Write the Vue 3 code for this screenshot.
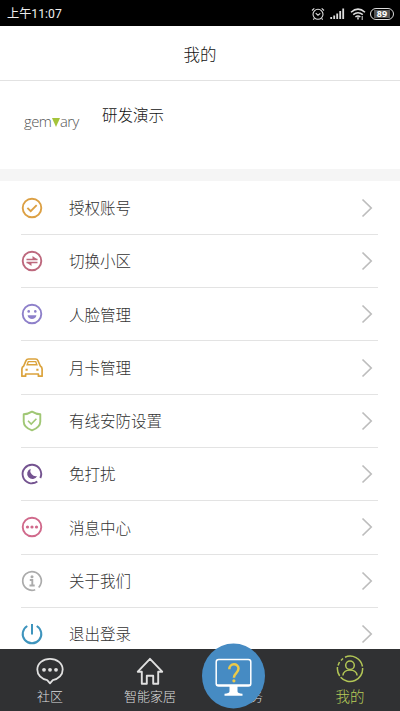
<script setup>
const rows = [
  { label: '授权账号', icon: 'check', color: '#dca044' },
  { label: '切换小区', icon: 'swap', color: '#bd687d' },
  { label: '人脸管理', icon: 'face', color: '#8e80ca' },
  { label: '月卡管理', icon: 'car', color: '#dba33c' },
  { label: '有线安防设置', icon: 'shield', color: '#a0c775' },
  { label: '免打扰', icon: 'moon', color: '#745390' },
  { label: '消息中心', icon: 'dots', color: '#d0698b' },
  { label: '关于我们', icon: 'info', color: '#ababab' },
  { label: '退出登录', icon: 'power', color: '#3e94bd' },
]
</script>

<template>
  <div class="screen">
    <div class="status">
      <span class="time">上午11:07</span>
      <svg class="alarm" viewBox="0 0 14 14" width="14" height="14" fill="none" stroke="#ddd" stroke-width="1.1">
        <circle cx="7" cy="7.3" r="5" /><path d="M4.7 6.2 7 8.2l2.3-1.8M1 3.5 3.3 1.4M13 3.5 10.7 1.4M3.4 11.4 2.3 12.7M10.6 11.4l1.1 1.3" />
      </svg>
      <svg class="signal" viewBox="0 0 15 11" width="15" height="11" stroke="#ddd" stroke-width="1.8">
        <path d="M1.2 11V9M4.2 11V7.5M7.2 11V5.5M10.2 11V3M13.2 11V.5" />
      </svg>
      <svg class="wifi" viewBox="0 0 16 12" width="16" height="12" fill="none" stroke="#ddd" stroke-width="1.5">
        <path d="M1 4.2Q8-2 15 4.2M3.2 6.7q4.8-4 9.6 0M5.4 9q2.6-2 5 0" /><path d="M8 9.2v2.4" /><path stroke-width="1" d="M12.2 8v4" />
      </svg>
      <span class="battery"><b>89</b></span>
    </div>
    <header class="title">我的</header>
    <section class="profile">
      <div class="logo">gem<svg viewBox="0 0 8 9" width="8" height="9"><path d="M0 0h8L4 9z" fill="#a4c43a" /></svg>ary</div>
      <div class="name">研发演示</div>
    </section>
    <main class="list">
      <div v-for="row in rows" :key="row.icon" class="row">
        <svg class="icon" viewBox="0 0 24 24" width="24" height="24" fill="none" :stroke="row.color" stroke-width="1.9">
          <template v-if="row.icon === 'check'">
            <circle cx="12" cy="12" r="9.3" /><path d="m7.4 11.8 3.3 3.3 6-6" />
          </template>
          <template v-else-if="row.icon === 'swap'">
            <circle cx="12" cy="12" r="9.3" /><path stroke-width="1.5" d="M6.5 10.5h11M6.5 13.5h11" /><path d="M12.5 7l5 3.5h-5zM11.5 17l-5-3.5h5z" :fill="row.color" stroke="none" />
          </template>
          <template v-else-if="row.icon === 'face'">
            <circle cx="12" cy="12" r="9.3" /><circle cx="8.7" cy="9.4" r="1.3" :fill="row.color" stroke="none" /><circle cx="15.3" cy="9.4" r="1.3" :fill="row.color" stroke="none" /><path d="M7.6 13.3h8.8c-.5 5-8.3 5-8.8 0z" :fill="row.color" stroke="none" />
          </template>
          <template v-else-if="row.icon === 'car'">
            <path stroke-width="1.7" stroke-linejoin="round" d="M1.9 20.2V13q0-2 1.8-3L6 4.7Q6.700 3 8.500 3h7q1.800 0 2.500 1.700l2.300 5.300q1.800 1 1.800 3v7.200h-3.700V18H5.600v2.200z" />
            <path stroke-width="1.4" d="M8.300 5.600h7.400l1.200 3.200H7.100z" /><path d="M5.500 13.700h2.200M16.300 13.700h2.200" />
          </template>
          <template v-else-if="row.icon === 'shield'">
            <path stroke-linejoin="round" d="M12 2.600q4 2.500 8.300 2.600v7.300q0 5.800-8.300 8.900-8.300-3.100-8.300-8.900V5.200Q8 5.100 12 2.600z" /><path stroke-width="1.6" d="m8 11.800 3.200 3.200 5.200-5.200" />
          </template>
          <template v-else-if="row.icon === 'moon'">
            <path d="M17.300 19.600A9.300 9.300 0 1 1 20.300 16M15.500 20.600 12 21.300" /><path d="M10.600 6.700a5.300 5.300 0 1 0 6.600 7.300 5.600 5.600 0 0 1-6.600-7.300z" :fill="row.color" stroke="none" />
          </template>
          <template v-else-if="row.icon === 'dots'">
            <circle cx="12" cy="12" r="9.3" /><circle v-for="x in [7.5, 12, 16.5]" :key="x" :cx="x" cy="12" r="1.6" :fill="row.color" stroke="none" />
          </template>
          <template v-else-if="row.icon === 'info'">
            <path stroke-width="1.7" d="M15.200 20.700A9.300 9.300 0 1 1 20.300 16.200Q19.700 17.400 18.700 18.500" /><circle cx="12" cy="7.7" r="1.5" :fill="row.color" stroke="none" /><path d="M9.800 11h2.500v5.500M9.500 16.500h5.200" />
          </template>
          <template v-else>
            <path stroke-width="2" d="M12 2v10.500M7.300 4a9.300 9.300 0 1 0 9.400 0" />
          </template>
        </svg>
        <span class="label">{{ row.label }}</span>
        <svg class="chevron" viewBox="0 0 12 20" width="12" height="20" fill="none" stroke="#bdbdbd" stroke-width="1.7"><path d="m1.500 1.500 8.700 8.500-8.700 8.500" /></svg>
      </div>
    </main>
    <nav class="tabs">
      <div class="tab">
        <svg viewBox="0 0 28 28" width="28" height="28" fill="none" stroke="#e0e0e0" stroke-width="1.8" stroke-linejoin="round">
          <path d="M14 1.800c7 0 12.700 4.700 12.700 10.800 0 5.300-4 9.500-9.900 10.500L14 26.300l-2.800-3.200C5.300 22.100 1.300 17.900 1.300 12.600 1.300 6.500 7 1.800 14 1.800z" />
          <circle v-for="x in [8, 14, 20]" :key="x" :cx="x" cy="12.8" r="1.9" fill="#e0e0e0" stroke="none" />
        </svg>
        <span>社区</span>
      </div>
      <div class="tab">
        <svg viewBox="0 0 28 28" width="28" height="28" fill="none" stroke="#e0e0e0" stroke-width="1.9" stroke-linejoin="round">
          <path d="M14 1.800 1.800 14.700h4v12h5v-8h6.400v8h5v-12h4z" />
        </svg>
        <span>智能家居</span>
      </div>
      <div class="tab"><i class="blank"></i><span>服务</span></div>
      <div class="tab active">
        <svg viewBox="0 0 28 28" width="28" height="28" fill="none" stroke="#b2c656" stroke-width="1.5">
          <path d="M9 2.200A12.600 12.600 0 0 1 26.500 11.500M26.600 13A12.600 12.600 0 0 1 4.600 22.300M3.700 21A12.600 12.600 0 0 1 1.500 12M2 10.500 3.500 7M5 5.500 7 3.500" />
          <circle cx="14" cy="10.2" r="4.3" /><path d="M6.900 20.500c.5-7.500 13.700-7.500 14.200 0" />
        </svg>
        <span>我的</span>
      </div>
      <div class="assist">
        <svg viewBox="0 0 64 66" width="64" height="66" fill="none">
          <ellipse cx="31.5" cy="33" rx="31.5" ry="32.5" fill="#468bc3" />
          <rect x="14.2" y="16.6" width="34.6" height="26.4" rx="2.5" stroke="#fff" stroke-width="1.5" />
          <path d="M14.500 41.300h34q0 1.700-1.500 1.700H16q-1.500 0-1.500-1.700zM27.500 43h8v5.500q.3 2 5 2.300v2h-18v-2q4.700-.3 5-2.300z" fill="#fff" />
          <path d="M27.300 26.300c0-6.600 9.200-6.300 9.200-.8 0 4.700-4.600 4.400-4.600 9.300" stroke="#edca48" stroke-width="2.5" /><circle cx="31.9" cy="37.8" r="1.6" fill="#edca48" />
        </svg>
      </div>
    </nav>
  </div>
</template>

<style>
body { margin: 0; overflow: hidden; }
</style>
<style scoped>
.screen { width: 400px; height: 711px; display: flex; flex-direction: column; overflow: hidden; background: #fff; color: #333; font-family: "Noto Sans CJK SC", sans-serif; font-weight: 300; }
svg { display: block; flex: none; }
.status { height: 26px; flex: none; box-sizing: border-box; padding: 1px 6px 0 7px; display: flex; align-items: center; background: #000; color: #eee; font-size: 12px; }
.time { flex: 1; line-height: 26px; font-family: Roboto, "Noto Sans CJK SC", sans-serif; font-weight: 400; font-size: 12.2px; }
.signal { margin-left: 5px; }
.wifi { margin-left: 5px; }
.battery { margin-left: 4px; width: 24px; height: 12px; box-sizing: border-box; border: 1px solid #ddd; border-radius: 6px; padding: 1px 3px; display: flex; }
.battery b { flex: 1; background: #555; color: #fff; font: bold 9px/8px "Noto Sans", sans-serif; text-align: center; }
.title { height: 55px; flex: none; box-sizing: border-box; border-bottom: 1px solid #e2e2e2; text-align: center; font-size: 16.5px; line-height: 56px; color: #111; }
.profile { height: 100px; flex: none; box-sizing: border-box; border-bottom: 12px solid #f5f5f5; display: flex; padding-left: 24px; }
.logo { width: 78px; display: flex; align-items: baseline; padding-top: 29px; height: 22px; line-height: 22px; font-family: "Open Sans", sans-serif; font-weight: 300; font-size: 14.8px; letter-spacing: -.5px; color: #555; }
.logo svg { margin-left: .5px; }
.name { padding-top: 21px; line-height: 24px; font-size: 15.5px; color: #111; }
.list { flex: 1; min-height: 0; overflow: hidden; padding: .5px 22px 0 21px; }
.row { height: 53.3px; box-sizing: border-box; display: flex; align-items: center; border-bottom: 1px solid #e3e3e3; }
.icon { margin-left: -1px; }
.label { margin-left: 25px; flex: 1; padding-bottom: 1.4px; font-size: 15.5px; line-height: 24px; }
.chevron { margin-right: 5px; }
.tabs { height: 62px; flex: none; display: flex; position: relative; background: #303133; color: #ddd; }
.tab { flex: 1; display: flex; flex-direction: column; align-items: center; padding-top: 8px; font-size: 13px; line-height: 20px; }
.tab span { margin-top: 1px; }
.blank { height: 28px; }
.active { color: #b9cd58; padding-top: 6px; font-size: 14.5px; }
.active span { margin-top: 3px; }
.assist { position: absolute; left: 202px; top: -6px; }
</style>
